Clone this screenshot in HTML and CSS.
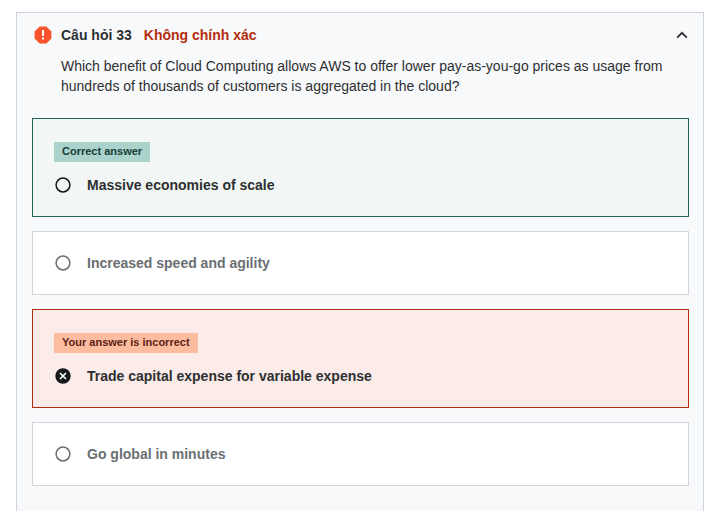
FILE: index.html
```html
<!DOCTYPE html>
<html lang="vi">
<head>
<meta charset="utf-8">
<meta name="viewport" content="width=device-width, initial-scale=1">
<title>Câu hỏi 33</title>
<link rel="stylesheet" href="styles.css">
</head>
<body>
<main class="question">
  <header class="question-header">
    <svg class="status-icon" viewBox="0 0 18 18" aria-hidden="true">
      <path fill="#f9532d" d="M5.600.6h6.800l5 5v6.800l-5 5H5.600l-5-5V5.600z"/>
      <path fill="#fff" d="M8 4h2v6H8zM8 11.500h2v2H8z"/>
    </svg>
    <h1 class="title">Câu hỏi 33</h1>
    <span class="result">Không chính xác</span>
    <button class="toggle" type="button" aria-label="Thu gọn" aria-expanded="true">
      <svg viewBox="0 0 12 8" aria-hidden="true"><path d="M1.200 6.600 6 1.800l4.800 4.800" fill="none" stroke="#2d2f31" stroke-width="1.800"/></svg>
    </button>
  </header>
  <p class="prompt" id="prompt">Which benefit of Cloud Computing allows AWS to offer lower pay-as-you-go prices as usage from hundreds of thousands of customers is aggregated in the cloud?</p>
  <div class="answers" role="radiogroup" aria-labelledby="prompt">
    <label class="answer correct">
      <span class="badge">Correct answer</span>
      <span class="choice">
        <span class="radio">
          <input type="radio" name="answer">
          <svg viewBox="0 0 16 16" aria-hidden="true"><circle cx="8" cy="8" r="6.900" fill="none" stroke="currentColor" stroke-width="1.500"/></svg>
        </span>
        <span>Massive economies of scale</span>
      </span>
    </label>
    <label class="answer">
      <span class="choice">
        <span class="radio">
          <input type="radio" name="answer">
          <svg viewBox="0 0 16 16" aria-hidden="true"><circle cx="8" cy="8" r="6.900" fill="none" stroke="currentColor" stroke-width="1.500"/></svg>
        </span>
        <span>Increased speed and agility</span>
      </span>
    </label>
    <label class="answer incorrect">
      <span class="badge">Your answer is incorrect</span>
      <span class="choice">
        <span class="radio">
          <input type="radio" name="answer" checked>
          <svg viewBox="0 0 16 16" aria-hidden="true"><circle cx="8" cy="8" r="7.700" fill="currentColor"/><path d="m5 5 6 6M11 5l-6 6" stroke="#fff" stroke-width="1.600"/></svg>
        </span>
        <span>Trade capital expense for variable expense</span>
      </span>
    </label>
    <label class="answer">
      <span class="choice">
        <span class="radio">
          <input type="radio" name="answer">
          <svg viewBox="0 0 16 16" aria-hidden="true"><circle cx="8" cy="8" r="6.900" fill="none" stroke="currentColor" stroke-width="1.500"/></svg>
        </span>
        <span>Go global in minutes</span>
      </span>
    </label>
  </div>
</main>
</body>
</html>
```
FILE: styles.css
```css
* {
  box-sizing: border-box;
}

body {
  display: flex;
  min-height: 100vh;
  margin: 0;
  padding: 12px 20px 0 16px;
  background: #fff;
  color: #2d2f31;
  font: 14px/20px "Liberation Sans", Arial, sans-serif;
}

svg {
  display: block;
}

.question {
  flex: 1;
  padding: 12px 14px 24px 15px;
  border: 1px solid #d1d4de;
  border-bottom: 0;
  background: #f8f9fb;
}

.question-header {
  display: flex;
  align-items: center;
  padding-left: 2px;
}

.status-icon {
  width: 18px;
  height: 18px;
  margin-right: 9px;
}

.title {
  margin: 0 12px 0 0;
  font-size: 14px;
  line-height: 20px;
}

.result {
  color: #b32d0f;
  font-weight: bold;
}

.toggle {
  margin-left: auto;
  padding: 4px 1px;
  border: 0;
  background: none;
  cursor: pointer;
}

.toggle svg {
  width: 12px;
  height: 8px;
}

.prompt {
  margin: 11px 8px 22px 29px;
}

.answers {
  display: grid;
  gap: 14px;
}

.answer {
  display: block;
  padding: 21px;
  border: 1px solid #d1d5db;
  background: #fff;
  color: #6a6f73;
  font-weight: bold;
  cursor: pointer;
}

.correct,
.incorrect {
  padding: 23px 21px 21px;
  color: #2d2f31;
}

.correct {
  border-color: #1d6357;
  background: #f2f6f5;
}

.incorrect {
  border-color: #b32d0f;
  background: #fbebe9;
}

.badge {
  display: block;
  width: fit-content;
  margin-bottom: 13px;
  padding: 0 8px 2px;
  font-size: 11px;
  line-height: 18px;
}

.correct .badge {
  background: #acd2cc;
  color: #153d36;
}

.incorrect .badge {
  background: #fcbca0;
  color: #5c2015;
}

.choice {
  display: flex;
  align-items: center;
  gap: 16px;
}

.radio {
  position: relative;
  width: 16px;
  height: 16px;
  margin-left: 1px;
}

.correct .radio,
.incorrect .radio {
  color: #16181a;
}

.radio input {
  position: absolute;
  inset: 0;
  width: 16px;
  height: 16px;
  margin: 0;
  opacity: 0;
}
```
